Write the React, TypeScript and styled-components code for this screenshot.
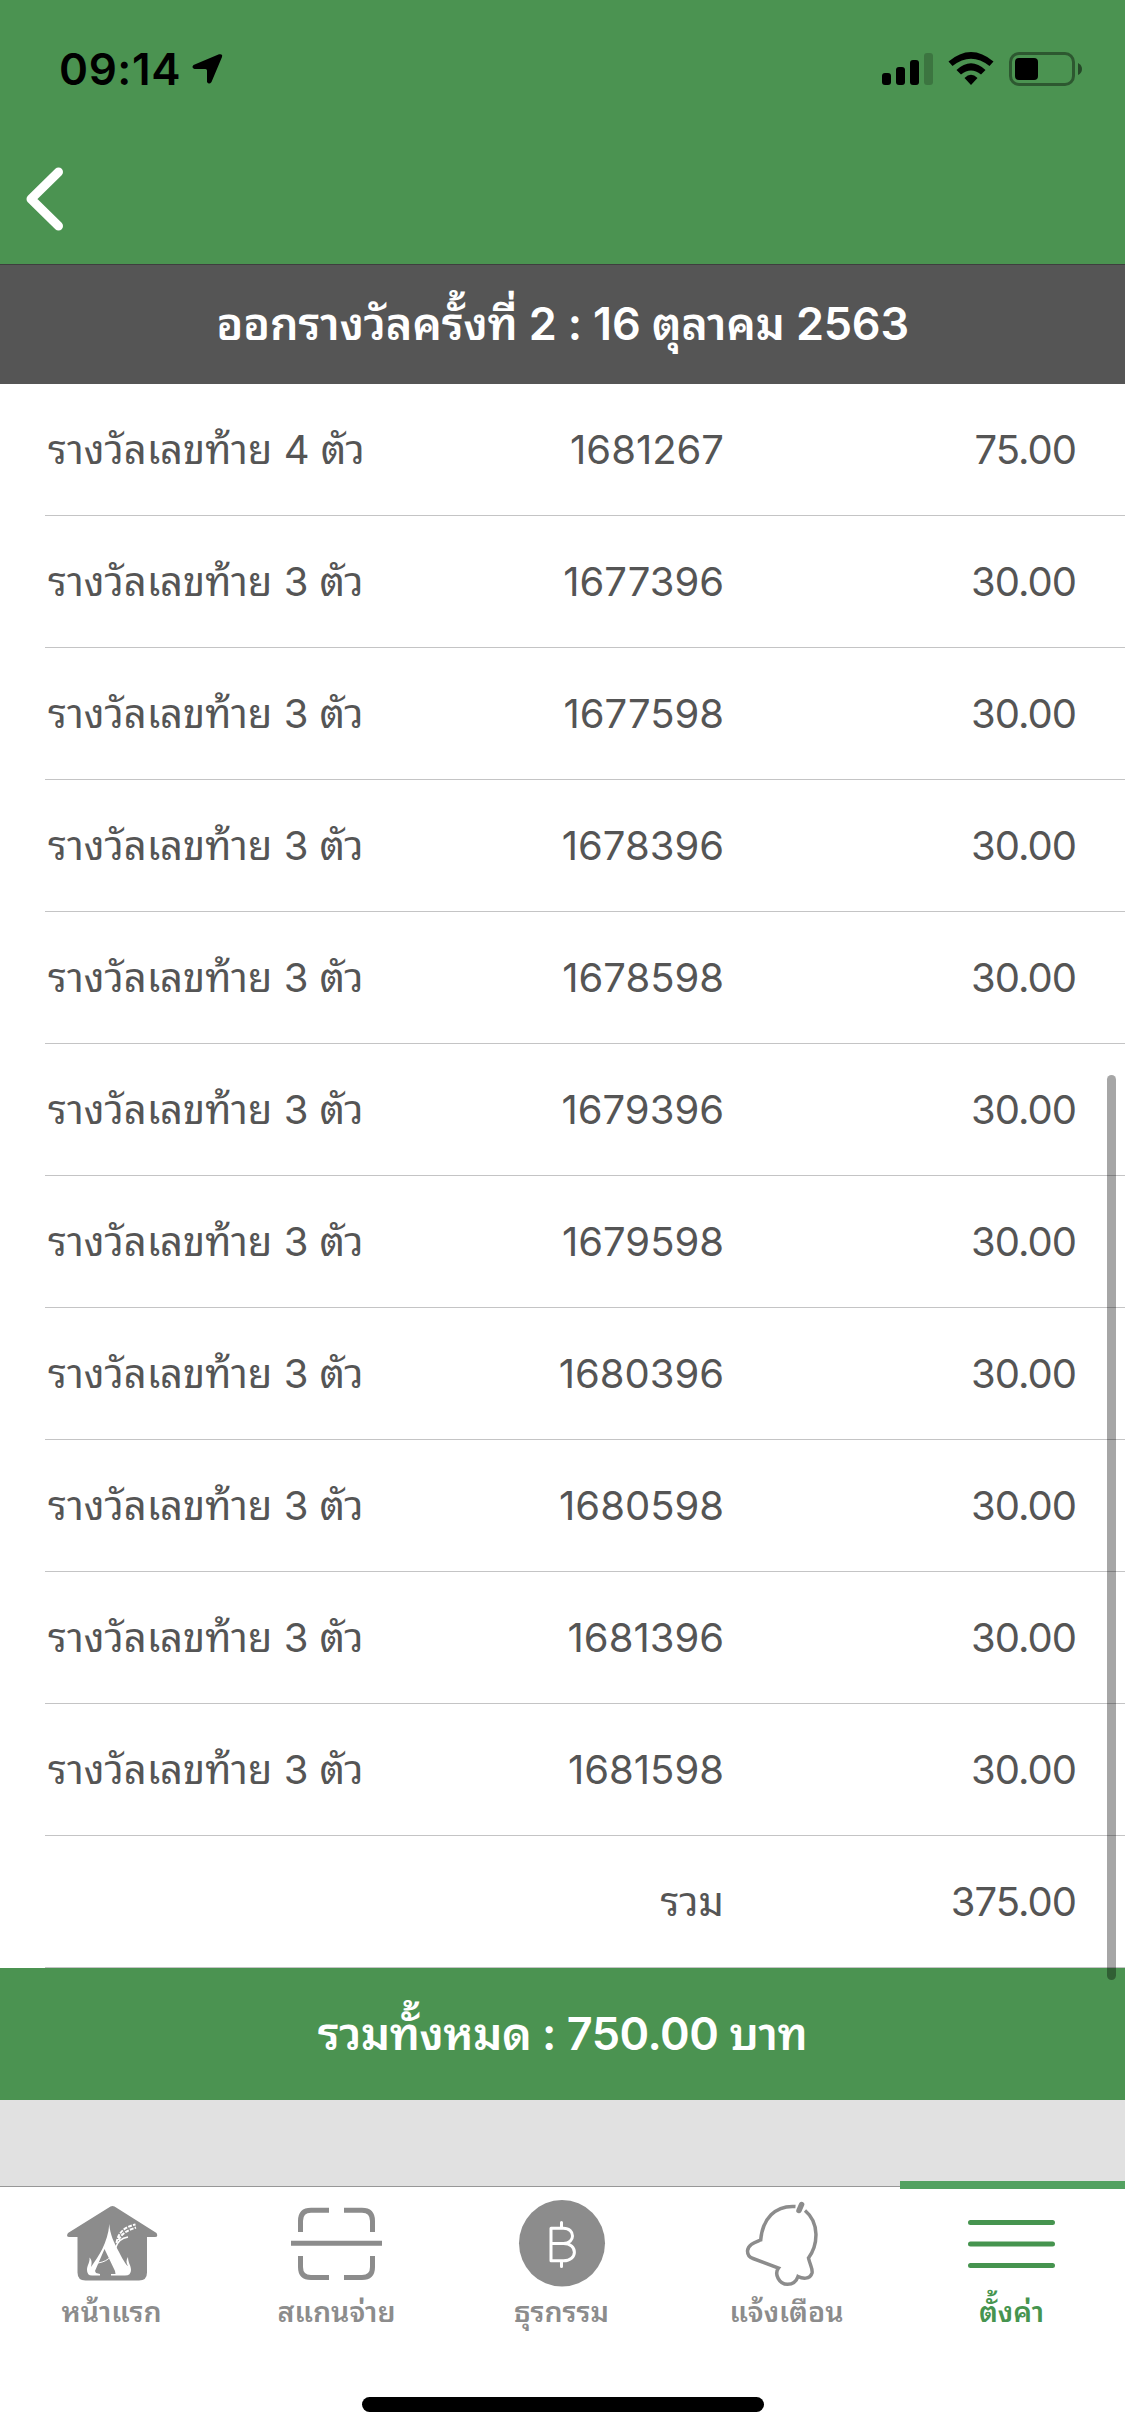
import React from 'react';
import styled, { createGlobalStyle } from 'styled-components';

const GREEN = '#4b9351';
const GREY = '#8c8c8c';

const GlobalStyle = createGlobalStyle`
  body { margin: 0; background: #fff; }
  * { box-sizing: border-box; }
`;

const Screen = styled.div`
  position: relative;
  width: 1125px;
  height: 2436px;
  display: flex;
  flex-direction: column;
  overflow: hidden;
  background: #fff;
  font-family: Inter, Thonburi, 'Noto Sans Thai Looped', Loma, Garuda, Umpush, Waree, 'Noto Sans Thai', sans-serif;
`;

const NavHeader = styled.header`
  height: 264px;
  background: ${GREEN};
  display: flex;
  flex-direction: column;
`;

const StatusBar = styled.div`
  height: 138px;
  padding: 0 43px 0 59px;
  display: flex;
  align-items: center;
  justify-content: space-between;
`;

const StatusGroup = styled.div<{ $gap: number }>`
  display: flex;
  align-items: center;
  gap: ${(p) => p.$gap}px;
`;

const Time = styled.span`
  font-size: 44px;
  font-weight: 600;
  line-height: 1;
  letter-spacing: 0.6px;
  color: #000;
`;

const BackButton = styled.button`
  width: 90px;
  height: 121px;
  padding: 0 0 0 26px;
  border: 0;
  background: none;
  display: flex;
  align-items: center;
`;

const Title = styled.h1`
  margin: 0;
  height: 120px;
  padding-bottom: 2px;
  border-top: 1px solid #3e3e3e;
  background: #555;
  color: #fff;
  display: flex;
  align-items: center;
  justify-content: center;
  font-size: 45px;
  line-height: 60px;
  letter-spacing: -0.2px;
  font-feature-settings: 'calt' 0;
  font-weight: 600;
  white-space: pre;
`;

const List = styled.ul`
  margin: 0;
  padding: 0 0 0 45px;
  list-style: none;
`;

const Row = styled.li`
  height: 132px;
  padding: 0 49px 0 3px;
  border-bottom: 1px solid #c4c4c5;
  display: grid;
  grid-template-columns: 400px 276px 1fr;
  align-items: center;
  font-size: 40px;
  line-height: 49px;
  color: #555;
  white-space: nowrap;
`;

const Cell = styled.span<{ $end?: boolean; $tight?: boolean }>`
  text-align: ${(p) => (p.$end ? 'right' : 'left')};
  letter-spacing: ${(p) => (p.$tight ? '-1px' : '0')};
`;

const Total = styled.div`
  height: 132px;
  background: ${GREEN};
  color: #fff;
  display: flex;
  align-items: center;
  justify-content: center;
  font-size: 45px;
  line-height: 60px;
  letter-spacing: -0.5px;
  font-feature-settings: 'calt' 0;
  font-weight: 600;
  white-space: pre;
`;

const Spacer = styled.div`
  height: 86px;
  background: #e1e1e1;
`;

const TabBar = styled.nav`
  flex: 1;
  border-top: 1px solid #979797;
  background: #fff;
  display: flex;
`;

const Tab = styled.button<{ $active?: boolean }>`
  position: relative;
  width: 225px;
  height: 150px;
  padding: 13px 2px 0 0;
  border: 0;
  background: none;
  display: flex;
  flex-direction: column;
  align-items: center;
  font-family: inherit;
  font-size: 28.500px;
  font-weight: 600;
  color: ${(p) => (p.$active ? '#46944f' : GREY)};
`;

const TabLabel = styled.span`
  line-height: 48px;
`;

const ActiveBar = styled.i`
  position: absolute;
  left: 0;
  top: -6px;
  width: 225px;
  height: 8px;
  background: #53a161;
`;

const HomeIndicator = styled.div`
  position: absolute;
  left: 362px;
  bottom: 24px;
  width: 402px;
  height: 15px;
  border-radius: 8px;
  background: #000;
`;

const ScrollThumb = styled.div`
  position: absolute;
  left: 1107px;
  top: 1075px;
  width: 9px;
  height: 905px;
  border-radius: 5px;
  background: rgba(0, 0, 0, 0.35);
`;

const rows = [
  ['รางวัลเลขท้าย 4 ตัว', '1681267', '75.00'],
  ['รางวัลเลขท้าย 3 ตัว', '1677396', '30.00'],
  ['รางวัลเลขท้าย 3 ตัว', '1677598', '30.00'],
  ['รางวัลเลขท้าย 3 ตัว', '1678396', '30.00'],
  ['รางวัลเลขท้าย 3 ตัว', '1678598', '30.00'],
  ['รางวัลเลขท้าย 3 ตัว', '1679396', '30.00'],
  ['รางวัลเลขท้าย 3 ตัว', '1679598', '30.00'],
  ['รางวัลเลขท้าย 3 ตัว', '1680396', '30.00'],
  ['รางวัลเลขท้าย 3 ตัว', '1680598', '30.00'],
  ['รางวัลเลขท้าย 3 ตัว', '1681396', '30.00'],
  ['รางวัลเลขท้าย 3 ตัว', '1681598', '30.00'],
  ['', 'รวม', '375.00'],
];

const HomeIcon = () => (
  <svg width="92" height="88" viewBox="66 2200 92 88">
    <path fill={GREY} d="M110.500 2206.600Q112.500 2205.400 114.500 2206.600L156.500 2233Q158.500 2237 155 2237H147V2272.500Q147 2280.500 139 2280.500H85.500Q77.500 2280.500 77.500 2272.500V2237H69.500Q65.500 2237 68 2233Z" />
    <path fill="#fff" d="M109.300 2224C110 2235 114 2242 119 2252C124 2262 127 2266 128 2266C126 2263 126 2260 128 2257C128 2263 131 2265 131 2270Q131 2275.500 125 2275.500H111V2274H115.500L115 2271L104.500 2249L95 2271L96 2273L100 2274V2275.500H92Q87 2275.500 87 2270C87 2265 90 2263 89.500 2257.500C92 2260 92 2263 91 2267C98 2257 108 2243 109.300 2224Z" />
    <g fill="none" stroke="#fff">
      <path strokeWidth="1" d="M98 2263C104 2262 108 2260 111 2256" />
      <path strokeWidth="1.600" d="M115.500 2248C117.500 2241 121 2238 128 2237" />
      <path strokeDasharray="4 1.200" strokeWidth="2" d="M116.500 2243C118 2233 124 2227 135.500 2224.500M118.500 2240C122 2233 128 2230 136 2227.500" />
    </g>
  </svg>
);

const ScanIcon = () => (
  <svg width="92" height="88" viewBox="291 2200 92 88" fill="none" stroke={GREY} strokeWidth="5">
    <path d="M300.500 2232V2221Q300.500 2210.300 311 2210.300H329M344 2210.300H362Q372.500 2210.300 372.500 2221V2232M372.500 2256V2267Q372.500 2277.500 362 2277.500H344M329 2277.500H311Q300.500 2277.500 300.500 2267V2256M291 2243.300H382" />
  </svg>
);

const BahtIcon = () => (
  <svg width="92" height="88" viewBox="516 2200 92 88">
    <ellipse cx="562" cy="2243.300" rx="43" ry="43.300" fill={GREY} />
    <path fill="none" stroke="#fff" strokeWidth="3" strokeLinecap="round" strokeLinejoin="round" d="M551 2228.300H563.500C575.500 2228.300 575.500 2243.500 563.500 2243.500H551M563.500 2243.500C578 2243.500 578 2260.800 563.500 2260.800H551V2228.300M561.500 2222.500V2228M561.500 2261V2266.500" />
  </svg>
);

const BellIcon = () => (
  <svg width="92" height="88" viewBox="741 2200 92 88" fill="none" stroke={GREY} strokeWidth="3.500">
    <path d="M795.500 2206.500C775 2205 762.500 2219 760.700 2240C756 2242 748 2244 747.500 2251C747.500 2255 750 2257.500 753 2258.500L778.500 2268C774 2274 779 2284.300 787.500 2284.300C793 2284.300 796.500 2281 798 2276.500C802 2278.500 810 2280 812 2273C813 2269 810 2265 808.500 2258C818 2245 820 2223 805 2210.500" />
    <path strokeWidth="5.500" strokeLinecap="round" d="M801.600 2204.500L799 2210.500" />
  </svg>
);

const MenuIcon = () => (
  <svg width="92" height="88" viewBox="966 2200 92 88" stroke="#46944f" strokeWidth="5" strokeLinecap="round">
    <path d="M970.500 2222.500H1052.500M970.500 2244H1052.500M970.500 2265.500H1052.500" />
  </svg>
);

const tabs = [
  { label: 'หน้าแรก', Icon: HomeIcon },
  { label: 'สแกนจ่าย', Icon: ScanIcon },
  { label: 'ธุรกรรม', Icon: BahtIcon },
  { label: 'แจ้งเตือน', Icon: BellIcon },
  { label: 'ตั้งค่า', Icon: MenuIcon, active: true },
];

export default function App() {
  return (
    <Screen>
      <GlobalStyle />
      <NavHeader>
        <StatusBar>
          <StatusGroup $gap={10}>
            <Time>09:14</Time>
            <svg width="32" height="32" viewBox="190 53 32 32">
              <path d="M192.500 65L218 54.300Q222 53.500 221 57L210.500 82Q208 85 206 82V70.500Q206 69 204.500 69H193.500Q190 67.500 192.500 65Z" />
            </svg>
          </StatusGroup>
          <svg width="200" height="34" viewBox="882 52 200 34">
            <rect x="882" y="73" width="9" height="12" rx="3" />
            <rect x="896" y="67" width="9" height="18" rx="3" />
            <rect x="910" y="60" width="9" height="25" rx="3" />
            <rect x="924" y="53" width="9" height="32" rx="3" opacity=".2" />
            <path d="M948.500 61.500Q971 42.500 993.500 61.500L989.500 66Q971 51.500 952.500 66ZM956.500 70Q971 56.500 985.500 70L981 74.500Q971 66.500 961 74.500ZM964.500 78Q971 71.500 977.500 78L971 85Z" />
            <rect x="1010.500" y="53.500" width="63" height="31" rx="8.500" fill="none" stroke="#000" strokeWidth="3" opacity=".4" />
            <rect x="1015" y="58" width="23" height="22" rx="4" />
            <path d="M1078 63Q1082 65 1082 69T1078 75Z" opacity=".5" />
          </svg>
        </StatusBar>
        <BackButton aria-label="back">
          <svg width="38" height="64" viewBox="26 166.500 38 64" fill="none" stroke="#fff" strokeWidth="9" strokeLinecap="round" strokeLinejoin="round">
            <path d="M58.500 171.500L31 198.500L58.500 225.500" />
          </svg>
        </BackButton>
      </NavHeader>
      <Title>ออกรางวัลครั้งที่ 2 : 16 ตุลาคม 2563</Title>
      <List>
        {rows.map(([name, number, amount], i) => (
          <Row key={i}>
            <Cell>{name}</Cell>
            <Cell $end>{number}</Cell>
            <Cell $end $tight>{amount}</Cell>
          </Row>
        ))}
      </List>
      <Total>รวมทั้งหมด : 750.00 บาท</Total>
      <Spacer />
      <TabBar>
        {tabs.map(({ label, Icon, active }) => (
          <Tab key={label} $active={active}>
            {active && <ActiveBar />}
            <Icon />
            <TabLabel>{label}</TabLabel>
          </Tab>
        ))}
      </TabBar>
      <HomeIndicator />
      <ScrollThumb />
    </Screen>
  );
}
